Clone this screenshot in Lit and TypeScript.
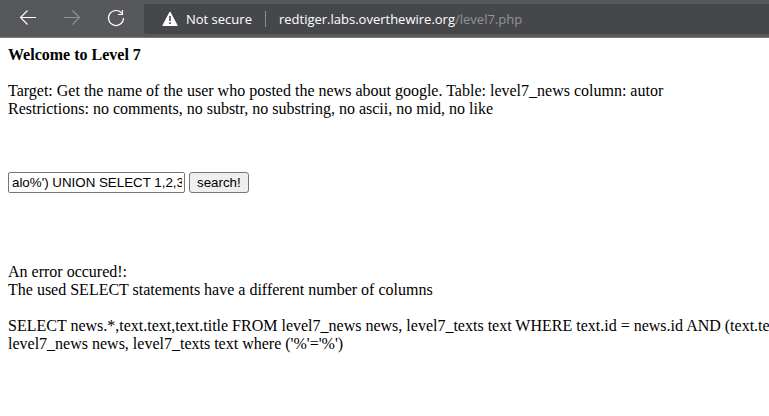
import { LitElement, html, css } from "lit";
import { customElement, state } from "lit/decorators.js";

@customElement("browser-bar")
class BrowserBar extends LitElement {
  static styles = css`
    :host {
      display: flex;
      align-items: center;
      height: 37px;
      background: #57585c;
      border-bottom: 1px solid #7b7c7f;
      font-family: "Segoe UI", "Open Sans", "Noto Sans", sans-serif;
      font-size: 13px;
      color: #fff;
    }
    nav {
      display: flex;
      flex: none;
      gap: 24px;
      padding: 0 18px;
    }
    button {
      display: block;
      width: 20px;
      height: 21px;
      padding: 0;
      border: 0;
      background: none;
      color: #fff;
    }
    button:disabled {
      color: #929396;
    }
    svg {
      display: block;
      fill: none;
      stroke: currentColor;
    }
    .address {
      display: flex;
      flex: 1;
      align-items: center;
      min-width: 0;
      height: 30px;
      padding-left: 18px;
      background: #46474b;
      border-radius: 3px 0 0 3px;
      white-space: nowrap;
    }
    .warning {
      flex: none;
      margin-right: 8px;
    }
    .divider {
      width: 1px;
      height: 16px;
      margin: 0 13px;
      background: #8d8e91;
    }
    a {
      color: #939497;
      text-decoration: none;
    }
    .host {
      color: #fff;
    }
  `;

  render() {
    return html`
      <nav aria-label="Browser">
        <button aria-label="Back">
          <svg width="20" height="21" viewBox="0 0 20 21">
            <path d="M18 9.5H2.8M9.5 2.5L2.5 9.5L9.5 16.5" stroke-width="1.1" />
          </svg>
        </button>
        <button aria-label="Forward" disabled>
          <svg width="20" height="21" viewBox="0 0 20 21">
            <path d="M2 9.5H17.2M10.5 2.5L17.5 9.5L10.5 16.5" stroke-width="1.1" />
          </svg>
        </button>
        <button aria-label="Refresh">
          <svg width="20" height="21" viewBox="0 0 20 21">
            <path d="M16 5.5A7.5 7.5 0 1 0 17.5 10M16.5 2V6.5H12" stroke-width="1.2" />
          </svg>
        </button>
      </nav>
      <div class="address">
        <svg class="warning" width="16" height="16" viewBox="0 0 16 16">
          <path d="M8 1L15.2 14.5H0.8Z" fill="#fff" stroke="#fff" stroke-linejoin="round" />
          <path d="M8 5V10M8 11.2V13" stroke="#46474b" stroke-width="1.6" />
        </svg>
        <span>Not secure</span>
        <span class="divider"></span>
        <a href="#"><span class="host">redtiger.labs.overthewire.org</span>/level7.php</a>
      </div>
    `;
  }
}

@customElement("app-root")
class AppRoot extends LitElement {
  static styles = css`
    :host {
      display: block;
      min-height: 100vh;
      overflow: hidden;
      background: #fff;
      color: #000;
      font-family: "Times New Roman", "Liberation Serif", serif;
      font-size: 16px;
      line-height: 18px;
    }
    main {
      padding: 8px;
    }
    h1 {
      margin: 0 0 18px;
      font-size: inherit;
    }
    p {
      margin: 0;
    }
    form {
      display: flex;
      gap: 4px;
      margin: 54px 0 70px;
    }
    input,
    button {
      box-sizing: border-box;
      height: 21px;
      border: 1px solid #767676;
      border-radius: 2px;
      font-family: Arial, "Liberation Sans", sans-serif;
      color: #000;
    }
    input {
      width: 177px;
      padding: 1px 2px 1px 3px;
      background: #fff;
    }
    button {
      padding: 1px 7px;
      border-radius: 3px;
      background: #efefef;
    }
    .query {
      margin-top: 18px;
      white-space: nowrap;
    }
  `;

  @state() private term = "alo%') UNION SELECT 1,2,3";

  render() {
    return html`
      <browser-bar></browser-bar>
      <main>
        <h1>Welcome to Level 7</h1>
        <p>
          Target: Get the name of the user who posted the news about google. Table: level7_news
          column: autor<br />Restrictions: no comments, no substr, no substring, no ascii, no mid,
          no like
        </p>
        <form @submit=${(e: Event) => e.preventDefault()}>
          <input type="text" aria-label="Search news" .value=${this.term} />
          <button>search!</button>
        </form>
        <p>
          An error occured!:<br />The used SELECT statements have a different number of columns
        </p>
        <p class="query">
          SELECT news.*,text.text,text.title FROM level7_news news, level7_texts text WHERE text.id
          = news.id AND (text.te<br />level7_news news, level7_texts text where ('%'='%')
        </p>
      </main>
    `;
  }
}
